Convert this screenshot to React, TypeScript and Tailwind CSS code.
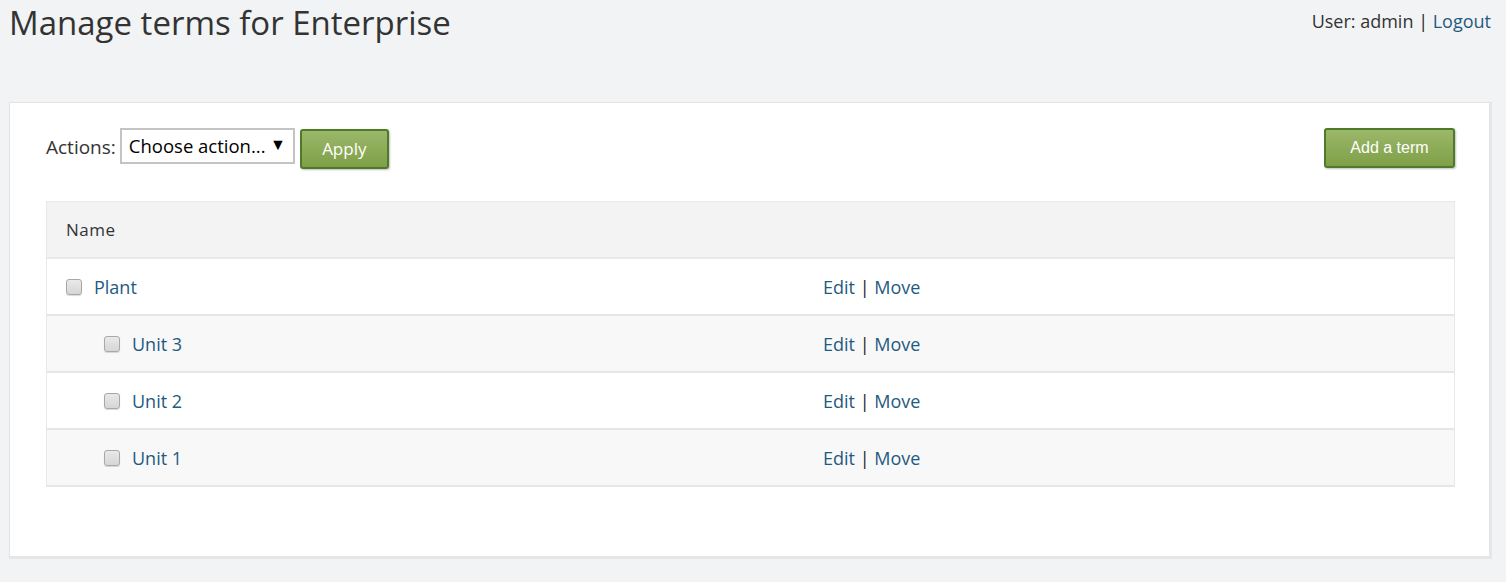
import React from 'react'

type Term = { id: string; name: string; depth: number }

const terms: Term[] = [
  { id: 'plant', name: 'Plant', depth: 0 },
  { id: 'unit3', name: 'Unit 3', depth: 1 },
  { id: 'unit2', name: 'Unit 2', depth: 1 },
  { id: 'unit1', name: 'Unit 1', depth: 1 },
]

function GreenButton({ children, className = '' }: { children: React.ReactNode; className?: string }) {
  return (
    <button
      type="button"
      className={`rounded-[3px] border-2 border-[#4f7a2a] bg-gradient-to-b from-[#9bb86a] to-[#7f9f47] text-white shadow-[1px_1px_2px_rgba(0,0,0,0.25)] ${className}`}
    >
      {children}
    </button>
  )
}

export default function App() {
  return (
    <div className="min-h-[582px] bg-[#f2f3f5] text-[#333] font-['Open_Sans',sans-serif]">
      <div className="flex items-start justify-between pl-[9px] pr-[15px]">
        <h1 className="text-[33px] leading-[46px] font-normal text-[#333]">Manage terms for Enterprise</h1>
        <div className="pt-[8px] text-[18px] leading-[26px]">
          User: admin <span className="text-[#222]">|</span> <a href="#" className="text-[#1f5a80]">Logout</a>
        </div>
      </div>

      <div className="ml-[9px] mr-[14px] mt-[56px] border border-[#e3e3e3] border-r-[3px] border-b-[3px] border-r-[#e6e6e6] border-b-[#e6e6e6] bg-white pl-[36px] pr-[34px] pt-[25px] pb-[69px]">
        <div className="flex items-start justify-between">
          <div className="flex items-start">
            <span className="mt-[7px] text-[19px] leading-[24px] text-[#333]">Actions:</span>
            <div className="ml-[4px] flex h-[36px] w-[175px] items-center justify-between border-2 border-[#c4c4c4] bg-white pl-[7px] pr-[7px] text-[18.5px] text-black">
              <span>Choose action...</span>
              <span className="-mt-[4px] text-[16px] leading-none">▼</span>
            </div>
            <GreenButton className="ml-[5px] mt-[1px] h-[40px] w-[89px] font-['Open_Sans',sans-serif] text-[17px]">Apply</GreenButton>
          </div>
          <GreenButton className="h-[40px] w-[131px] font-['Liberation_Sans',Arial,sans-serif] text-[16px]">Add a term</GreenButton>
        </div>

        <div className="mt-[32px] border-l border-r border-[#e8e8e8]">
          <div className="flex h-[58px] items-center border-t border-b-2 border-[#e8e8e8] bg-[#f3f3f3] pt-[1px] pl-[19px] text-[17px] tracking-[0.5px]">
            Name
          </div>
          {terms.map((t, i) => (
            <div
              key={t.id}
              className={`flex h-[57px] items-center border-b-2 border-[#e6e6e6] pt-[2px] text-[18px] ${i % 2 === 1 ? 'bg-[#f8f8f8]' : 'bg-white'}`}
            >
              <div className={`flex w-[776px] items-center ${t.depth ? 'pl-[57px]' : 'pl-[19px]'}`}>
                <span className="-mt-[2px] h-[16px] w-[16px] rounded-[3px] border border-[#a8a8a8] bg-gradient-to-b from-[#e9e9e9] to-[#d6d6d6] shadow-[0_1px_1px_rgba(0,0,0,0.15)]" />
                <a href="#" className="ml-[12px] text-[#1f5a80]">{t.name}</a>
              </div>
              <div>
                <a href="#" className="text-[#1f5a80]">Edit</a>
                <span className="text-[#222]"> | </span>
                <a href="#" className="text-[#1f5a80]">Move</a>
              </div>
            </div>
          ))}
        </div>
      </div>
    </div>
  )
}
